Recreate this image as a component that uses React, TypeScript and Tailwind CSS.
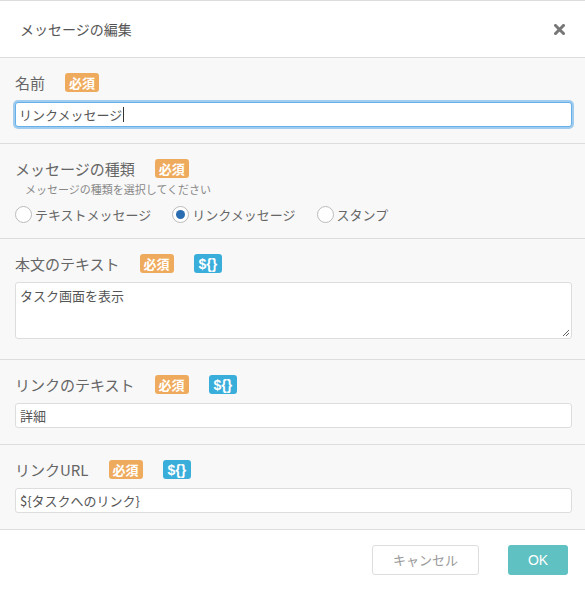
import type { ReactNode } from "react";

const font = "font-['Noto_Sans_CJK_JP','Noto_Sans',sans-serif]";

function Required() {
  return (
    <span className="inline-flex h-[19px] items-center rounded-[3px] bg-[#efab5d] px-[4px] text-[13px] font-bold leading-none text-white">
      必須
    </span>
  );
}

function Vars() {
  return (
    <span className="inline-flex h-[19px] items-center rounded-[3px] bg-[#3aaedb] px-[5px] font-['Liberation_Sans',sans-serif] text-[14px] font-bold leading-none text-white">
      {"${}"}
    </span>
  );
}

function Label({ text, vars }: { text: string; vars?: boolean }) {
  return (
    <div className="flex h-[19px] items-center gap-5">
      <span className="text-[15px] leading-none text-[#666]">{text}</span>
      <Required />
      {vars ? <Vars /> : null}
    </div>
  );
}

function Section({ children, className = "" }: { children: ReactNode; className?: string }) {
  return (
    <div className={`border-b border-[#dddddd] bg-[#f8f8f8] pl-[15px] pr-[13px] pt-[15px] ${className}`}>
      {children}
    </div>
  );
}

function Radio({ label, checked }: { label: string; checked?: boolean }) {
  return (
    <label className="flex items-center gap-[3px]">
      <span className="flex h-[17px] w-[17px] items-center justify-center rounded-full border-[1.5px] border-[#bbbbbb] bg-white">
        {checked ? <span className="h-[9px] w-[9px] rounded-full bg-[#2a6db0]" /> : null}
      </span>
      <span className="text-[13px] leading-none text-[#666]">{label}</span>
    </label>
  );
}

export default function App() {
  return (
    <div className={`h-[591px] w-[585px] overflow-hidden border-t border-[#dddddd] bg-white ${font}`}>
      {/* Header */}
      <div className="flex h-[57px] items-center justify-between border-b border-[#dddddd] pl-[20px] pr-[20px]">
        <div className="text-[14px] text-[#555]">メッセージの編集</div>
        <svg width="11" height="11" viewBox="0 0 11 11">
          <path d="M1.5 1.5 L9.5 9.5 M9.5 1.5 L1.5 9.5" stroke="#777" strokeWidth="3" strokeLinecap="square" />
        </svg>
      </div>

      {/* 名前 */}
      <Section className="pb-[16px]">
        <Label text="名前" />
        <div className="mt-[10px] flex h-[25px] items-center rounded-[3px] border border-[#66afe9] bg-white px-[3px] text-[13px] text-[#555] shadow-[0_0_0_2px_rgba(102,175,233,0.6)]">
          リンクメッセージ<span className="ml-px inline-block h-[15px] w-px bg-[#333]" />
        </div>
      </Section>

      {/* メッセージの種類 */}
      <Section className="pb-[15px]">
        <Label text="メッセージの種類" />
        <div className="mt-[5px] pl-[10px] text-[11px] leading-[12px] text-[#888]">
          メッセージの種類を選択してください
        </div>
        <div className="mt-[10px] flex h-[18px] items-center gap-[21px]">
          <Radio label="テキストメッセージ" />
          <Radio label="リンクメッセージ" checked />
          <Radio label="スタンプ" />
        </div>
      </Section>

      {/* 本文のテキスト */}
      <Section className="pb-[20px]">
        <Label text="本文のテキスト" vars />
        <div className="relative mt-[9px] h-[57px] rounded-[3px] border border-[#dddddd] bg-white px-[4px] py-[4px] text-[13px] leading-[17px] text-[#555]">
          タスク画面を表示
          <svg className="absolute bottom-[2px] right-[2px]" width="7" height="7" viewBox="0 0 7 7">
            <path d="M7 1 L1 7 M7 4 L4 7" stroke="#666" strokeWidth="1" />
          </svg>
        </div>
      </Section>

      {/* リンクのテキスト */}
      <Section className="pb-[16px]">
        <Label text="リンクのテキスト" vars />
        <div className="mt-[9px] flex h-[25px] items-center rounded-[3px] border border-[#dddddd] bg-white px-[4px] text-[13px] text-[#555]">
          詳細
        </div>
      </Section>

      {/* リンクURL */}
      <Section className="pb-[16px]">
        <Label text="リンクURL" vars />
        <div className="mt-[9px] flex h-[25px] items-center rounded-[3px] border border-[#dddddd] bg-white px-[4px] text-[13px] text-[#555]">
          {"${タスクへのリンク}"}
        </div>
      </Section>

      {/* Footer */}
      <div className="flex justify-end gap-[29px] pr-[17px] pt-[15px]">
        <button className="h-[30px] w-[107px] rounded-[3px] border border-[#dddddd] bg-white text-[13px] text-[#999]">
          キャンセル
        </button>
        <button className="h-[30px] w-[60px] rounded-[3px] bg-[#5fc1c1] font-['Liberation_Sans',sans-serif] text-[14px] text-white">
          OK
        </button>
      </div>
    </div>
  );
}
